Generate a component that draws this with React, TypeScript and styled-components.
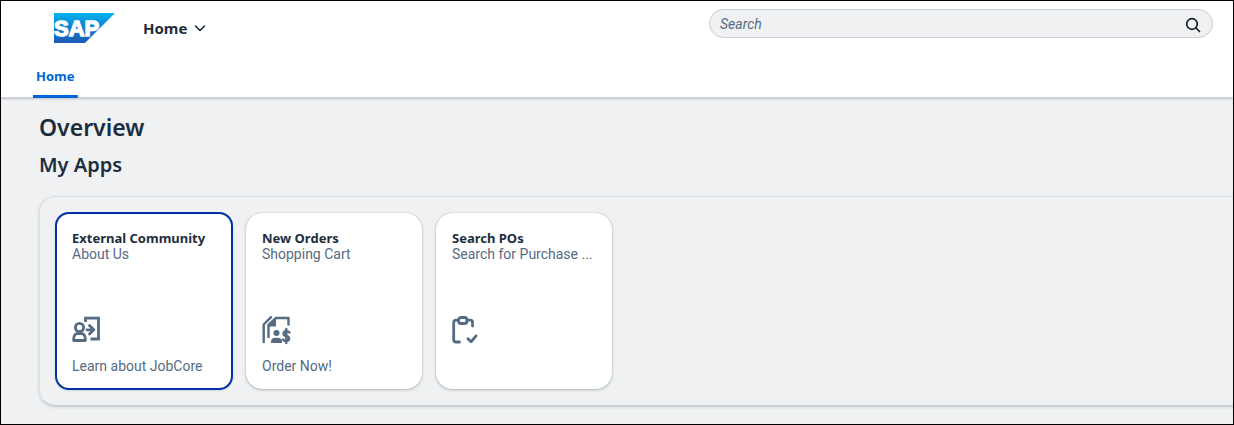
import React from "react";
import styled, { createGlobalStyle } from "styled-components";

const GlobalStyle = createGlobalStyle`
  * { box-sizing: border-box; }
  body {
    margin: 0;
    background: #eff1f2;
    color: #1d2d3e;
    font-family: "Noto Sans", "Open Sans", sans-serif;
  }
  h1, h2, h3, p { margin: 0; }
  button, input { font: inherit; }
`;

const Shell = styled.div`
  min-height: 100vh;
  border: 1px solid #000;
  overflow: hidden;
`;

const Header = styled.header`
  background: #fff;
  border-bottom: 1px solid #d0d3d8;
  box-shadow: 0 1px 2px rgba(34, 53, 72, 0.25);
`;

const TopBar = styled.div`
  display: flex;
  align-items: flex-start;
  padding: 8px 20px 0 53px;
`;

const LogoLink = styled.a`
  display: block;
  margin: 4px 20px 0 0;
  svg { display: block; }
`;

const TitleButton = styled.button`
  display: flex;
  align-items: center;
  gap: 7px;
  height: 38px;
  padding: 0 7px;
  border: 0;
  background: none;
  color: #1d2d3e;
  font-size: 15px;
  font-weight: 700;
`;

const SearchForm = styled.form`
  display: flex;
  align-items: center;
  flex: 0 1 504px;
  height: 29px;
  margin-left: auto;
  padding: 0 9px 0 10px;
  border: 1px solid #c8cdd3;
  border-radius: 15px;
  background: #eff1f2;
`;

const SearchInput = styled.input`
  flex: 1;
  min-width: 0;
  padding: 0;
  border: 0;
  outline: 0;
  background: none;
  color: #1d2d3e;
  font-family: Roboto, sans-serif;
  font-size: 14px;
  line-height: 16px;
  &::placeholder { color: #556b82; font-style: italic; opacity: 1; }
`;

const IconButton = styled.button`
  display: flex;
  padding: 3px 2px 1px;
  border: 0;
  background: none;
  color: #131e29;
`;

const Tabs = styled.nav`
  display: flex;
  padding: 13px 32px 0;
`;

const Tab = styled.a`
  display: block;
  height: 38px;
  margin-bottom: -1px;
  padding: 6px 3px 0;
  border-radius: 2px 2px 0 0;
  background: linear-gradient(#0064d9, #0064d9) bottom / 100% 3px no-repeat;
  color: #0064d9;
  font-size: 13px;
  line-height: 20px;
  font-weight: 700;
  text-decoration: none;
`;

const Main = styled.main`
  padding: 13px 0 18px 38px;
`;

const PageTitle = styled.h1`
  font-size: 23px;
  line-height: 32px;
  font-weight: 600;
`;

const SectionTitle = styled.h2`
  padding-top: 9px;
  font-size: 20px;
  line-height: 26px;
  font-weight: 600;
`;

const Panel = styled.section`
  display: flex;
  gap: 14px;
  margin: 18px -16px 0 0;
  padding: 16px;
  border: 1px solid #dcdfe2;
  border-bottom-color: #c5cbce;
  border-radius: 16px;
  box-shadow: 0 1px 3px rgba(34, 53, 72, 0.2);
`;

const Tile = styled.a<{ $focused?: boolean }>`
  display: flex;
  flex-direction: column;
  flex: none;
  width: 176px;
  height: 176px;
  padding: 17px 16px 15px;
  border-radius: 16px;
  background: #fff;
  box-shadow: 0 0 1px rgba(34, 53, 72, 0.4), 0 1px 3px rgba(34, 53, 72, 0.28);
  color: #556b82;
  font-family: Roboto, sans-serif;
  font-size: 14px;
  line-height: 16px;
  text-decoration: none;
  ${(p) => p.$focused && "border-radius: 13px; outline: 2px solid #0032a5; outline-offset: -1px;"}
`;

const TileTitle = styled.h3`
  color: #1d2d3e;
  font-family: "Noto Sans", sans-serif;
  font-size: 13px;
  line-height: 16px;
  font-weight: 700;
  white-space: nowrap;
`;

const TileSubtitle = styled.p`
  overflow: hidden;
  text-overflow: ellipsis;
  white-space: nowrap;
`;

const TileIcon = styled.div`
  height: 32px;
  margin-top: 53px;
  svg { display: block; }
`;

const TileFooter = styled.p`
  margin-top: auto;
`;

const Logo = () => (
  <svg width="62" height="30" viewBox="0 0 62 30" aria-hidden="true">
    <defs>
      <linearGradient id="sap" x1="0" y1="0" x2="0" y2="1">
        <stop offset="0" stopColor="#04b3ee" />
        <stop offset="0.5" stopColor="#0f80d0" />
        <stop offset="1" stopColor="#1e5bb8" />
      </linearGradient>
    </defs>
    <path d="M0 0H61L31 30H0Z" fill="url(#sap)" />
    <text x="0" y="23" fill="#fff" stroke="#fff" strokeWidth="1.400" fontFamily="Liberation Sans, sans-serif" fontWeight="700" fontSize="22">SAP</text>
  </svg>
);

const Chevron = () => (
  <svg width="12" height="8" viewBox="0 0 12 8" fill="none" stroke="#1d2d3e" strokeWidth="1.6" strokeLinecap="round" strokeLinejoin="round" aria-hidden="true">
    <path d="M1.5 2 6 6.500l4.500-4.500" />
  </svg>
);

const SearchIcon = () => (
  <svg width="16" height="16" viewBox="0 0 16 16" fill="none" stroke="currentColor" strokeWidth="1.700" strokeLinecap="round" aria-hidden="true">
    <circle cx="7" cy="7" r="5.300" />
    <path d="m11 11 3.500 3.500" />
  </svg>
);

const CommunityIcon = () => (
  <svg width="30" height="30" viewBox="0 0 30 30" fill="none" stroke="#556b82" strokeWidth="2.800" strokeLinecap="round" strokeLinejoin="round" aria-hidden="true">
    <circle cx="7.500" cy="12.500" r="4.100" />
    <path d="M1.700 25.500v-1.500c0-3.500 2-5.500 4-5.500h3.600c2 0 4 2 4 5.500v1.500Z" />
    <path d="M13.500 7V3.200H26.500V24H18.500" strokeLinecap="butt" strokeLinejoin="miter" />
    <path d="M15 14.800h6M17.500 10.500l4.300 4.300-4.300 4.200" />
  </svg>
);

const OrdersIcon = () => (
  <svg width="30" height="30" viewBox="0 0 30 30" fill="none" stroke="#556b82" strokeWidth="2.400" strokeLinecap="round" strokeLinejoin="round" aria-hidden="true">
    <path d="M1.700 27V9.500L9 2.200M6.500 22V9.800L14 3H26.500V9.500" />
    <path d="M6.500 11.500V9.500L14 2.500V11.500Z" fill="#556b82" stroke="none" />
    <circle cx="14.500" cy="18" r="3" fill="#556b82" stroke="none" />
    <path d="M9 28v-1.500c0-2.500 2-3.800 4-3.800h3c2 0 4 1.300 4 3.800V28Z" fill="#556b82" stroke="none" />
    <path d="M27.500 17.500c-.8-.9-1.700-1.200-3-1.200-3.700 0-3.700 4.200-.5 4.700 4 .7 4.200 5 0 5-1.500 0-2.500-.5-3.200-1.400M24.300 14v14" />
  </svg>
);

const PurchaseIcon = () => (
  <svg width="30" height="30" viewBox="0 0 30 30" fill="none" stroke="#556b82" strokeWidth="2.800" strokeLinecap="round" strokeLinejoin="round" aria-hidden="true">
    <path d="M6 5.200H4Q1.700 5.200 1.700 7.500V24.500Q1.700 27 4 27H7.500M15 5.200h3.500Q20.500 5.200 20.500 7.500V11" />
    <rect x="6.500" y="2.500" width="8.500" height="6" rx="2.500" />
    <path d="m16 23.800 3 3 5-6" />
  </svg>
);

const tiles = [
  { title: "External Community", subtitle: "About Us", footer: "Learn about JobCore", icon: <CommunityIcon />, focused: true },
  { title: "New Orders", subtitle: "Shopping Cart", footer: "Order Now!", icon: <OrdersIcon /> },
  { title: "Search POs", subtitle: "Search for Purchase ...", footer: "", icon: <PurchaseIcon /> },
];

export default function App() {
  return (
    <Shell>
      <GlobalStyle />
      <Header>
        <TopBar>
          <LogoLink href="#" aria-label="SAP"><Logo /></LogoLink>
          <TitleButton type="button">Home<Chevron /></TitleButton>
          <SearchForm role="search" onSubmit={(e) => e.preventDefault()}>
            <SearchInput type="text" placeholder="Search" aria-label="Search" />
            <IconButton type="submit" aria-label="Submit search"><SearchIcon /></IconButton>
          </SearchForm>
        </TopBar>
        <Tabs><Tab href="#" aria-current="page">Home</Tab></Tabs>
      </Header>
      <Main>
        <PageTitle>Overview</PageTitle>
        <SectionTitle>My Apps</SectionTitle>
        <Panel aria-label="My Apps">
          {tiles.map((t) => (
            <Tile key={t.title} href="#" $focused={t.focused}>
              <TileTitle>{t.title}</TileTitle>
              <TileSubtitle>{t.subtitle}</TileSubtitle>
              <TileIcon>{t.icon}</TileIcon>
              {t.footer && <TileFooter>{t.footer}</TileFooter>}
            </Tile>
          ))}
        </Panel>
      </Main>
    </Shell>
  );
}
